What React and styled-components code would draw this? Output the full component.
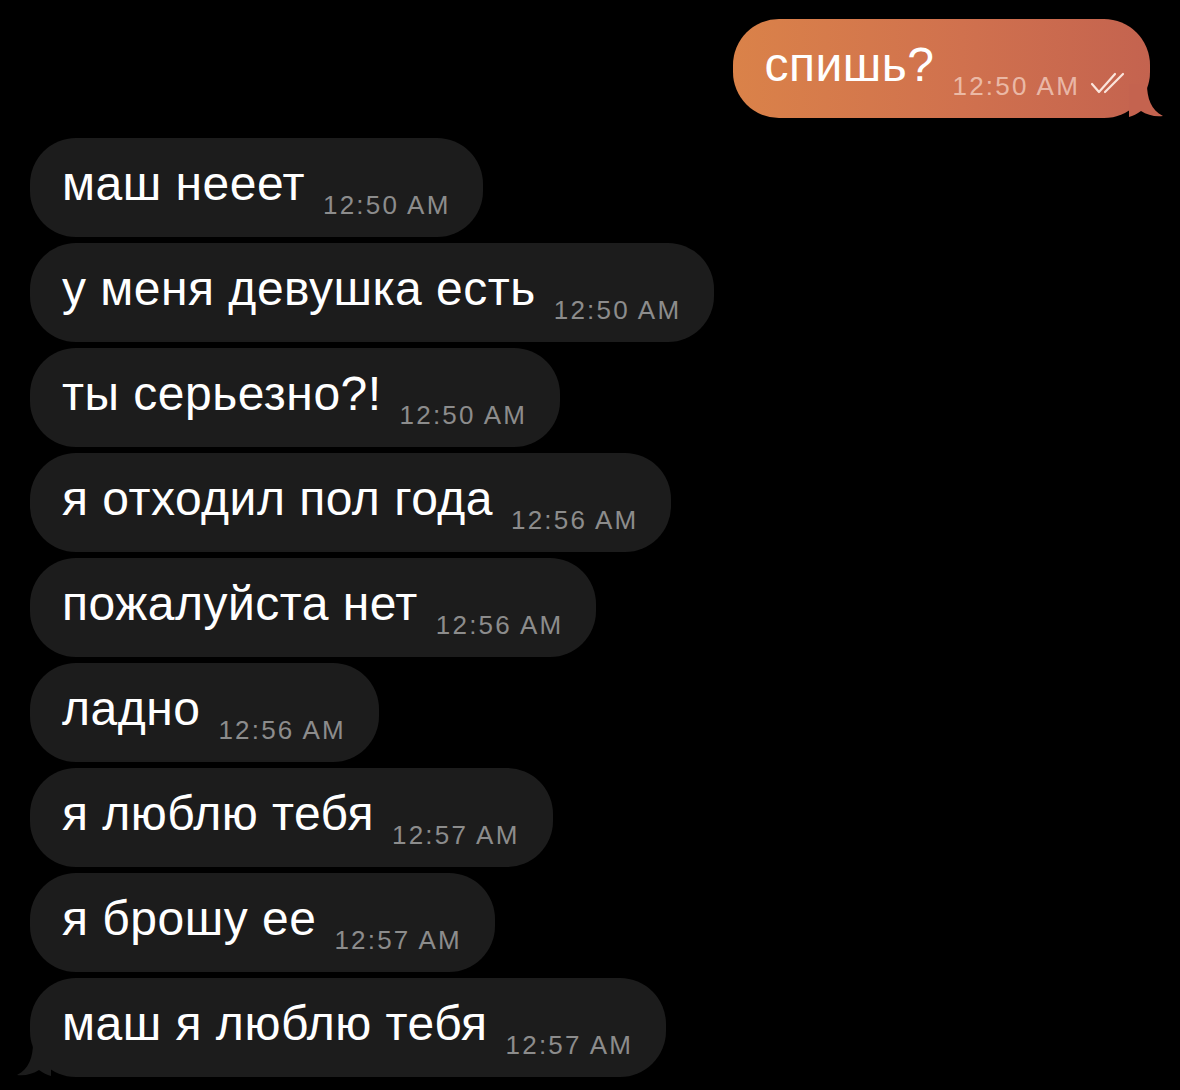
import React from "react";
import styled, { createGlobalStyle } from "styled-components";

const GlobalStyle = createGlobalStyle`
  html, body {
    margin: 0;
    padding: 0;
    background: #000;
  }
  body {
    font-family: "Liberation Sans", Arial, sans-serif;
  }
`;

const Chat = styled.div`
  width: 1180px;
  height: 1090px;
  box-sizing: border-box;
  padding: 19px 30px 0;
  display: flex;
  flex-direction: column;
  gap: 6px;
  background: #000;
  overflow: hidden;
`;

const Row = styled.div`
  display: flex;
  justify-content: ${(p) => (p.$out ? "flex-end" : "flex-start")};
  margin-bottom: ${(p) => (p.$out ? "14px" : "0")};
`;

const Bubble = styled.div`
  position: relative;
  height: 99px;
  box-sizing: border-box;
  padding: ${(p) => (p.$out ? "0 22px 0 32px" : "0 33px 0 32px")};
  border-radius: 46px;
  display: flex;
  align-items: center;
  background: ${(p) =>
    p.$out ? "linear-gradient(90deg, #da8249 0%, #d0714e 55%, #c4634f 100%)" : "#1c1c1c"};
`;

const Text = styled.div`
  font-size: 48px;
  line-height: 1;
  letter-spacing: 0.5px;
  color: #fff;
  white-space: nowrap;
  margin-top: 2px;
`;

const Time = styled.span`
  display: inline-block;
  vertical-align: -14px;
  margin-left: 18px;
  font-size: 26px;
  letter-spacing: 2.2px;
  color: ${(p) => (p.$out ? "rgba(255, 236, 226, 0.62)" : "#8c8c8c")};
`;

const Ticks = styled.svg`
  display: inline-block;
  vertical-align: -14px;
  margin-left: 8px;
  width: 40px;
  height: 24px;
`;

const Tail = styled.svg`
  position: absolute;
  bottom: 0;
  width: 34px;
  height: 34px;
  ${(p) => (p.$out ? "right: -13px;" : "left: -13px; transform: scaleX(-1);")}
`;

const messages = [
  { text: "маш нееет", time: "12:50 AM" },
  { text: "у меня девушка есть", time: "12:50 AM" },
  { text: "ты серьезно?!", time: "12:50 AM" },
  { text: "я отходил пол года", time: "12:56 AM" },
  { text: "пожалуйста нет", time: "12:56 AM" },
  { text: "ладно", time: "12:56 AM" },
  { text: "я люблю тебя", time: "12:57 AM" },
  { text: "я брошу ее", time: "12:57 AM" },
  { text: "маш я люблю тебя", time: "12:57 AM", tail: true },
];

const BubbleTail = ({ out, color }) => (
  <Tail $out={out} viewBox="0 0 34 34">
    <path
      d="M0 0 L18 0 C18 14 22 26 34 32 C26 33 18 31 12 27 C8 30 4 32 0 33 Z"
      fill={color}
    />
  </Tail>
);

const App = () => (
  <>
    <GlobalStyle />
    <Chat>
      <Row $out>
        <Bubble $out>
          <Text>
            спишь?
            <Time $out>12:50 AM</Time>
            <Ticks viewBox="0 0 40 24">
              <path
                d="M4 13 L11 21 L27 3 M17 21 L35 3"
                fill="none"
                stroke="rgba(255, 240, 232, 0.92)"
                strokeWidth="2.2"
                strokeLinecap="round"
                strokeLinejoin="round"
              />
            </Ticks>
          </Text>
          <BubbleTail out color="#c4634f" />
        </Bubble>
      </Row>
      {messages.map((m) => (
        <Row key={m.text}>
          <Bubble>
            <Text>
              {m.text}
              <Time>{m.time}</Time>
            </Text>
            {m.tail && <BubbleTail color="#1c1c1c" />}
          </Bubble>
        </Row>
      ))}
    </Chat>
  </>
);

export default App;
